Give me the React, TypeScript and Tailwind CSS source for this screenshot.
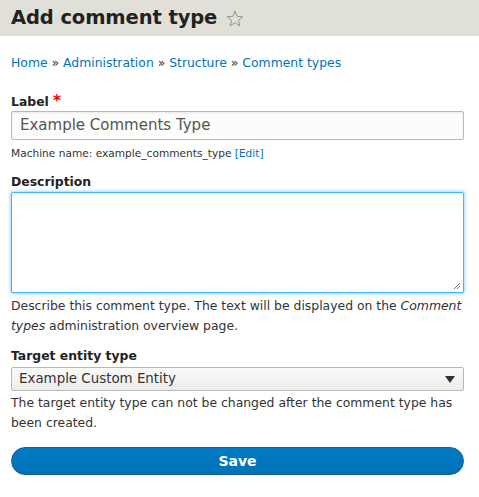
import React from "react";

export default function App() {
  const font = { fontFamily: '"DejaVu Sans", "Lucida Grande", sans-serif' };
  return (
    <div className="w-[479px] h-[497px] bg-white text-[#333] overflow-hidden" style={font}>
      <div className="h-[36px] bg-[#e0e0d8] flex items-center pl-[11px] gap-[9px]">
        <h1 className="text-[19.5px] font-bold text-[#222] leading-none tracking-[-0.1px]">Add comment type</h1>
        <svg width="18" height="17" viewBox="0 0 24 23" className="mt-[1px]">
          <path
            d="M12 1.5 L14.9 8.6 L22.5 9.1 L16.6 14 L18.5 21.4 L12 17.3 L5.5 21.4 L7.4 14 L1.5 9.1 L9.1 8.6 Z"
            fill="none"
            stroke="#8a8a80"
            strokeWidth="1.2"
          />
        </svg>
      </div>
      <div className="px-[11px]">
        <nav className="mt-[18px] text-[12.4px] leading-[18px] text-[#0074bd]">
          Home <span className="text-[#333]">»</span> Administration <span className="text-[#333]">»</span> Structure{" "}
          <span className="text-[#333]">»</span> Comment types
        </nav>

        <div className="mt-[20px]">
          <div className="text-[12.4px] font-bold leading-[18px] text-[#222]">
            Label <span className="text-[#e00] text-[15px]">*</span>
          </div>
          <div className="h-[29px] w-[453px] border border-[#b8b8b8] rounded-[2px] bg-[#fcfcfa] flex items-center px-[8px] text-[15px] text-[#555] shadow-[inset_0_1px_2px_rgba(0,0,0,0.08)]">
            Example Comments Type
          </div>
          <div className="mt-[5px] text-[10.6px] leading-[16px] text-[#333]">
            Machine name: example_comments_type <span className="text-[#0074bd]">[Edit]</span>
          </div>
        </div>

        <div className="mt-[12px]">
          <div className="text-[12.4px] font-bold leading-[18px] text-[#222]">Description</div>
          <div className="mt-[1px] relative h-[101px] w-[453px] border border-[#40b6ff] rounded-[2px] bg-white shadow-[0_0_3px_1px_rgba(64,182,255,0.5)]">
            <svg width="8" height="8" viewBox="0 0 8 8" className="absolute right-[2px] bottom-[2px]">
              <path d="M7 1 L1 7 M7 4 L4 7" stroke="#777" strokeWidth="1" />
            </svg>
          </div>
          <div className="mt-[3px] text-[12.4px] leading-[20px] text-[#333] w-[453px]">
            Describe this comment type. The text will be displayed on the <em>Comment types</em> administration overview page.
          </div>
        </div>

        <div className="mt-[11px]">
          <div className="text-[12.4px] font-bold leading-[18px] text-[#222]">Target entity type</div>
          <div className="mt-[2px] h-[24px] w-[453px] border border-[#b8b8b8] rounded-[2px] bg-gradient-to-b from-[#fafafa] to-[#ececea] flex items-center justify-between pl-[7px] pr-[8px] text-[13.4px] text-[#333]">
            <span>Example Custom Entity</span>
            <svg width="10" height="7" viewBox="0 0 10 7">
              <path d="M0 0 H10 L5 7 Z" fill="#333" />
            </svg>
          </div>
          <div className="mt-[2px] text-[12.4px] leading-[20px] text-[#333] w-[453px]">
            The target entity type can not be changed after the comment type has been created.
          </div>
        </div>

        <button className="mt-[14px] h-[28px] w-[453px] rounded-full bg-gradient-to-b from-[#007bc6] to-[#0071b8] border border-[#1e5c90] text-white font-bold text-[14px] flex items-center justify-center">
          Save
        </button>
      </div>
    </div>
  );
}
